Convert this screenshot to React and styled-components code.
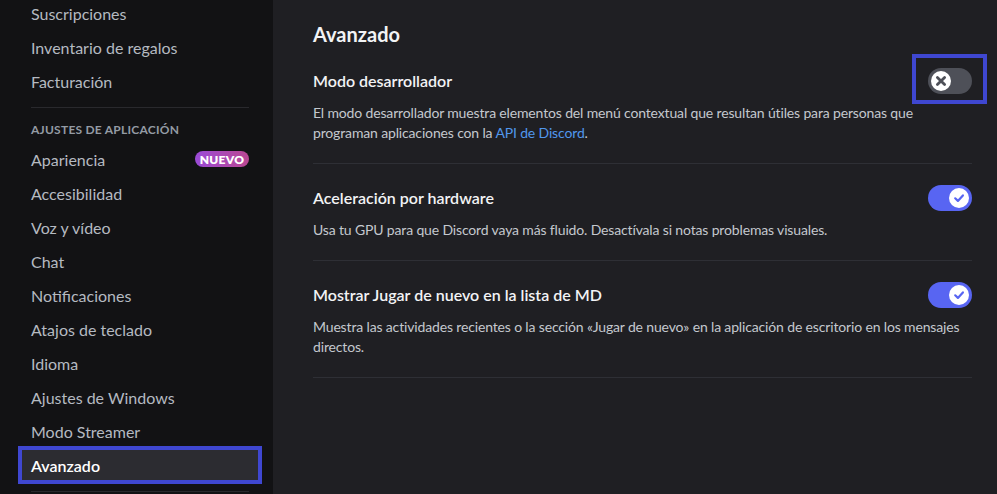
import React from 'react';
import styled, { createGlobalStyle } from 'styled-components';

const GlobalStyle = createGlobalStyle`
  html, body {
    margin: 0;
    padding: 0;
    background: #1f1f23;
    height: 494px;
    overflow: hidden;
  }
  * {
    box-sizing: border-box;
  }
`;

const Layout = styled.div`
  display: flex;
  height: 494px;
  font-family: Lato, 'Noto Sans', sans-serif;
`;

const Sidebar = styled.nav`
  width: 273px;
  flex-shrink: 0;
  background: #121214;
  padding: 0 14px 0 21px;
  overflow: hidden;
`;

const NavList = styled.div`
  margin-top: -3px;
  display: flex;
  flex-direction: column;
`;

const NavItem = styled.div`
  position: relative;
  display: flex;
  align-items: center;
  justify-content: space-between;
  height: 32px;
  margin-bottom: 2px;
  padding: 0 10px;
  border-radius: 4px;
  font-size: 16px;
  color: ${(p) => (p.$active ? '#ffffff' : '#b5bac1')};
  font-weight: ${(p) => (p.$active ? 600 : 400)};
  background: ${(p) => (p.$active ? '#2c2c31' : 'transparent')};
`;

const SideDivider = styled.div`
  height: 1px;
  margin: 8px 10px;
  background: #29292d;
`;

const SideHeader = styled.div`
  padding: 6px 10px 5px;
  font-size: 12px;
  line-height: 16px;
  font-weight: 700;
  letter-spacing: 0.02em;
  text-transform: uppercase;
  color: #949ba4;
`;

const Badge = styled.span`
  display: inline-flex;
  align-items: center;
  justify-content: center;
  height: 16px;
  width: 54px;
  border-radius: 8px;
  background: linear-gradient(90deg, #9a4bd7, #bb4792);
  color: #fff;
  font-size: 12px;
  font-weight: 800;
  letter-spacing: 0.02em;
`;

const Highlight = styled.span`
  position: absolute;
  pointer-events: none;
  border: 4px solid #3f47d1;
  top: ${(p) => p.$t}px;
  right: ${(p) => p.$r}px;
  bottom: ${(p) => p.$b}px;
  left: ${(p) => p.$l}px;
`;

const Main = styled.main`
  flex: 1;
  padding: 22px 25px 0 40px;
  overflow: hidden;
`;

const Heading = styled.h2`
  margin: 0 0 21px;
  font-size: 20px;
  line-height: 24px;
  font-weight: 700;
  color: #f2f3f5;
`;

const Setting = styled.section`
  border-bottom: 1px solid #2e2f35;
  padding-bottom: 20px;
  margin-bottom: 20px;
`;

const SettingHead = styled.div`
  display: flex;
  align-items: center;
  justify-content: space-between;
  height: 28px;
`;

const SettingTitle = styled.div`
  font-size: 16px;
  font-weight: 600;
  color: #f2f3f5;
  margin-top: -2px;
`;

const SettingDesc = styled.p`
  margin: 8px 0 0;
  max-width: ${(p) => p.$width};
  font-size: 14px;
  line-height: 20px;
  letter-spacing: -0.15px;
  color: #c4c8ce;

  a {
    color: #5197ed;
    text-decoration: none;
  }
`;

const Track = styled.div`
  position: relative;
  width: 44px;
  height: 26px;
  border-radius: 13px;
  flex-shrink: 0;
  background: ${(p) => (p.$on ? '#5865f2' : '#4e5058')};
`;

const Knob = styled.div`
  position: absolute;
  top: 3px;
  left: ${(p) => (p.$on ? '21px' : '3px')};
  width: 20px;
  height: 20px;
  border-radius: 50%;
  background: #ffffff;
  display: flex;
  align-items: center;
  justify-content: center;
`;

function Toggle({ on, highlight }) {
  return (
    <Track $on={on}>
      <Knob $on={on}>
        {on ? (
          <svg width="12" height="12" viewBox="0 0 12 12">
            <path d="M2.2 6.3 L4.9 8.9 L9.9 3.4" fill="none" stroke="#5865f2" strokeWidth="2.2" strokeLinecap="round" strokeLinejoin="round" />
          </svg>
        ) : (
          <svg width="12" height="12" viewBox="0 0 12 12">
            <path d="M2.4 2.4 L9.6 9.6 M9.6 2.4 L2.4 9.6" fill="none" stroke="#4e5058" strokeWidth="2.8" strokeLinecap="round" />
          </svg>
        )}
      </Knob>
      {highlight && <Highlight $t={-14} $r={-15} $b={-10} $l={-16} />}
    </Track>
  );
}

const topItems = ['Suscripciones', 'Inventario de regalos', 'Facturación'];
const appItems = [
  'Apariencia',
  'Accesibilidad',
  'Voz y vídeo',
  'Chat',
  'Notificaciones',
  'Atajos de teclado',
  'Idioma',
  'Ajustes de Windows',
  'Modo Streamer',
  'Avanzado',
];

const settings = [
  {
    title: 'Modo desarrollador',
    on: false,
    highlight: true,
    width: '615px',
    desc: (
      <>
        El modo desarrollador muestra elementos del menú contextual que resultan útiles para personas que
        programan aplicaciones con la <a href="#">API de Discord</a>.
      </>
    ),
  },
  {
    title: 'Aceleración por hardware',
    on: true,
    width: '615px',
    desc: 'Usa tu GPU para que Discord vaya más fluido. Desactívala si notas problemas visuales.',
  },
  {
    title: 'Mostrar Jugar de nuevo en la lista de MD',
    on: true,
    width: 'none',
    desc: 'Muestra las actividades recientes o la sección «Jugar de nuevo» en la aplicación de escritorio en los mensajes directos.',
  },
];

export default function App() {
  return (
    <>
      <GlobalStyle />
      <Layout>
        <Sidebar>
          <NavList>
            {topItems.map((item) => (
              <NavItem key={item}>{item}</NavItem>
            ))}
            <SideDivider />
            <SideHeader>Ajustes de aplicación</SideHeader>
            {appItems.map((item) => (
              <NavItem key={item} $active={item === 'Avanzado'}>
                {item}
                {item === 'Apariencia' && <Badge>NUEVO</Badge>}
                {item === 'Avanzado' && <Highlight $t={-3} $r={-3} $b={-3} $l={-3} />}
              </NavItem>
            ))}
            <SideDivider />
          </NavList>
        </Sidebar>
        <Main>
          <Heading>Avanzado</Heading>
          {settings.map((s) => (
            <Setting key={s.title}>
              <SettingHead>
                <SettingTitle>{s.title}</SettingTitle>
                <Toggle on={s.on} highlight={s.highlight} />
              </SettingHead>
              <SettingDesc $width={s.width}>{s.desc}</SettingDesc>
            </Setting>
          ))}
        </Main>
      </Layout>
    </>
  );
}
